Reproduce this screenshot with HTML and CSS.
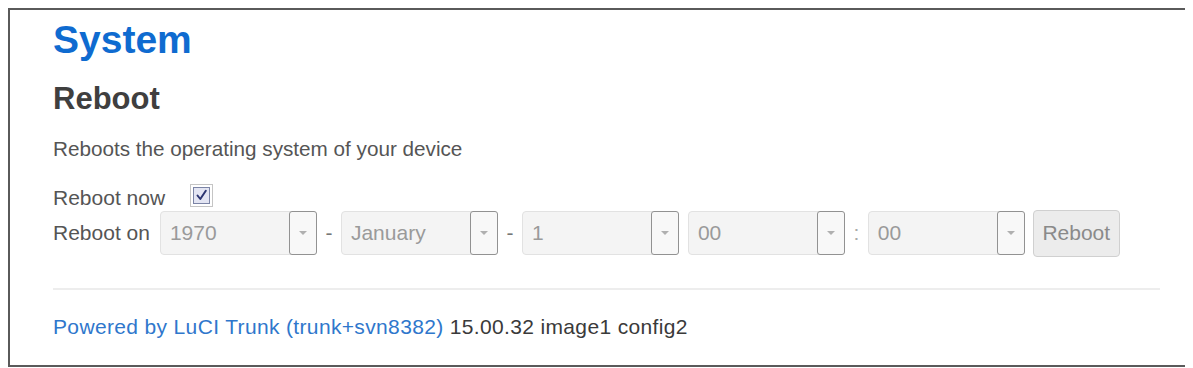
FILE: index.html
```html
<!DOCTYPE html>
<html lang="en">
<head>
<meta charset="utf-8">
<title>System - Reboot</title>
<link rel="stylesheet" href="styles.css">
</head>
<body>
<div class="frame">
  <h1 class="page-title">System</h1>
  <h2 class="section-title">Reboot</h2>
  <p class="desc">Reboots the operating system of your device</p>
  <div class="row row-now">
    <span class="label">Reboot now</span>
    <span class="check" aria-label="checked">
      <svg width="23" height="23" viewBox="0 0 23 23">
        <rect x="0.5" y="0.5" width="22" height="22" fill="none" stroke="#8a8a8a" stroke-dasharray="1 1"/>
        <rect x="3.5" y="3.5" width="16" height="16" fill="#e3e5f3" stroke="#7b84a6"/>
        <path d="M7.5 11.5 L10.3 15 L15.8 6.8" fill="none" stroke="#2c3572" stroke-width="2" stroke-linecap="round" stroke-linejoin="round"/>
      </svg>
    </span>
  </div>
  <div class="row row-on">
    <span class="label label-on">Reboot on</span>
    <div class="select"><span class="val">1970</span><span class="drop"><i class="tri"></i></span></div>
    <span class="sep">-</span>
    <div class="select"><span class="val">January</span><span class="drop"><i class="tri"></i></span></div>
    <span class="sep">-</span>
    <div class="select"><span class="val">1</span><span class="drop"><i class="tri"></i></span></div>
    <span class="gap"></span>
    <div class="select"><span class="val">00</span><span class="drop"><i class="tri"></i></span></div>
    <span class="sep sep-colon">:</span>
    <div class="select"><span class="val">00</span><span class="drop"><i class="tri"></i></span></div>
    <button class="btn" type="button">Reboot</button>
  </div>
  <hr class="rule">
  <p class="footer"><a class="footer-link" href="#">Powered by LuCI Trunk (trunk+svn8382)</a> 15.00.32 image1 config2</p>
</div>
</body>
</html>
```
FILE: styles.css
```css
* { box-sizing: border-box; }
html, body { background: #ffffff; }
body {
  margin: 8px;
  font-family: "Liberation Sans", Arial, sans-serif;
  color: #4a4a4a;
}
.frame {
  width: 1182px;
  height: 359px;
  border: 2px solid #5a5a5a;
  padding: 8px 28px 0 43px;
  overflow: hidden;
}
.page-title {
  margin: 0;
  font-size: 39px;
  line-height: 44px;
  font-weight: bold;
  color: #0f6bd0;
}
.section-title {
  margin: 19px 0 0;
  font-size: 31px;
  line-height: 36px;
  font-weight: bold;
  color: #3f3f3f;
}
.desc {
  margin: 19.5px 0 0;
  font-size: 20.7px;
  line-height: 24px;
  color: #555;
}
.row {
  display: flex;
  align-items: center;
}
.row-now {
  margin-top: 25px;
  height: 24px;
  align-items: flex-start;
  font-size: 21px;
  line-height: 24px;
  color: #555;
}
.check {
  display: block;
  width: 23px;
  height: 23px;
  margin-left: 25px;
  margin-top: -2px;
}
.check svg { display: block; }
.row-on {
  height: 47px;
  font-size: 21px;
  color: #555;
}
.label-on { margin-right: 10px; line-height: 24px; }
.select {
  position: relative;
  width: 157px;
  height: 44px;
  border: 1px solid #e2e2e2;
  border-radius: 4px;
  background: #f4f4f4;
  display: flex;
  align-items: center;
}
.val {
  padding-left: 9px;
  color: #9a9a9a;
  font-size: 21px;
}
.drop {
  position: absolute;
  right: -1px;
  top: -1px;
  width: 28px;
  height: 44px;
  border: 1px solid #929292;
  border-radius: 3px;
  background: #f8f8f8;
  display: flex;
  align-items: center;
  justify-content: center;
}
.tri {
  display: block;
  width: 0;
  height: 0;
  border-left: 4px solid transparent;
  border-right: 4px solid transparent;
  border-top: 4px solid #b0b0b0;
}
.sep {
  margin: 0 8.5px;
  color: #777;
}
.sep-colon { color: #aaa; }
.gap { width: 9px; }
.btn {
  margin-left: 8px;
  width: 87px;
  height: 47px;
  border: 1px solid #d0d0d0;
  border-radius: 4px;
  background: #ececec;
  color: #8a8a8a;
  font-family: "Liberation Sans", Arial, sans-serif;
  font-size: 21px;
  padding: 0;
}
.rule {
  margin: 31px 0 0;
  height: 2px;
  border: 0;
  background: #ededed;
}
.footer {
  margin: 25.7px 0 0;
  font-size: 21px;
  line-height: 24px;
  letter-spacing: 0.35px;
  color: #3a3a3a;
}
.footer-link {
  color: #2f77cc;
  text-decoration: none;
}
```
